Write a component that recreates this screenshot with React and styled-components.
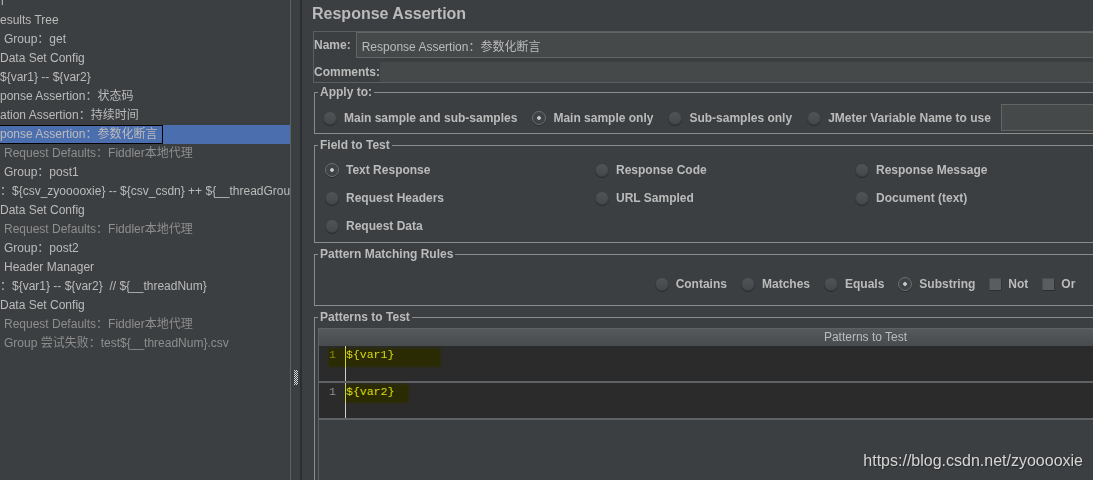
import React from "react";
import styled, { createGlobalStyle } from "styled-components";

const FONT = `"Liberation Sans", Arial, "Noto Sans CJK SC", sans-serif`;
const MONO = `"Liberation Mono", "Courier New", monospace`;

const GlobalStyle = createGlobalStyle`
  html, body { margin: 0; padding: 0; background: #3c3f41; }
  body { font-family: ${FONT}; }
  * { box-sizing: border-box; }
`;

const Window = styled.div`
  position: relative;
  display: flex;
  width: 1093px;
  height: 480px;
  overflow: hidden;
  background: #3c3f41;
  color: #bbbbbb;
  font-family: ${FONT};
`;

/* ---------- left tree ---------- */
const TreePane = styled.div`
  flex: none;
  width: 291px;
  border-right: 1px solid #5e6163;
  overflow: hidden;
`;

const TreeList = styled.ul`
  list-style: none;
  margin: -8px 0 0;
  padding: 0;
`;

const TreeRow = styled.li`
  height: 19px;
  line-height: 19px;
  font-size: 12px;
  white-space: pre;
  overflow: hidden;
  padding-left: ${(p) => p.$indent || 0}px;
  color: ${(p) => (p.$disabled ? "#8e8e8e" : "#bbbbbb")};
  background: ${(p) => (p.$selected ? "#4b6eaf" : "transparent")};
`;

const FocusLabel = styled.span`
  display: inline-block;
  height: 19px;
  line-height: 17px;
  border: 1px solid #000;
  border-left: none;
  padding-right: 5px;
`;

/* ---------- splitter ---------- */
const Splitter = styled.div`
  flex: none;
  width: 11px;
  border-right: 2px solid #2b2d2f;
  padding: 370px 0 0 3px;
`;

const Grip = () => {
  const dots = [];
  for (let y = 0; y < 15; y++) {
    for (let x = 0; x < 4; x++) {
      if ((x + y) % 2 === 0) dots.push(<rect key={`${x}-${y}`} x={x} y={y} width="1" height="1" />);
    }
  }
  return (
    <svg width="4" height="15" viewBox="0 0 4 15" fill="#d8d8d8" style={{ display: "block" }}>
      {dots}
    </svg>
  );
};

/* ---------- right editor ---------- */
const Editor = styled.div`
  flex: none;
  width: 1120px;
  padding: 0 6px 0 10px;
  display: flex;
  flex-direction: column;
`;

const Title = styled.h1`
  margin: 0;
  height: 27px;
  padding-top: 1px;
  font-size: 16px;
  line-height: 26px;
  font-weight: bold;
  color: #bbbbbb;
`;

const NameBox = styled.div`
  margin: 4px 0 0 1px;
  border: 1px solid #5c5f61;
  border-right: none;
  display: flex;
  flex-direction: column;
  gap: 4px;
`;

const FieldRow = styled.div`
  display: flex;
  align-items: center;
  height: ${(p) => p.$h}px;
`;

const BoldLabel = styled.span`
  flex: none;
  font-size: 12px;
  font-weight: bold;
  color: #bbbbbb;
  white-space: nowrap;
  margin-right: ${(p) => p.$gap || 0}px;
`;

const TextField = styled.div`
  flex: 1;
  align-self: stretch;
  background: #45494a;
  border: ${(p) => (p.$bordered ? "1px solid #646464" : "none")};
  border-right: none;
  padding-left: 5px;
  font-size: 12px;
  display: flex;
  align-items: center;
  color: #bbbbbb;
  white-space: nowrap;
`;

const Group = styled.fieldset`
  margin: ${(p) => p.$mt}px 0 0 2px;
  padding: 0;
  border: 1px solid #8c8c8c;
  min-width: 0;
`;

const Legend = styled.legend`
  margin-left: 3px;
  padding: 0 2px;
  font-size: 12px;
  font-weight: bold;
  line-height: 15px;
  color: #bbbbbb;
`;

const OptionRow = styled.div`
  display: flex;
  align-items: center;
  gap: ${(p) => p.$gap}px;
  padding: ${(p) => p.$pad};
  justify-content: ${(p) => (p.$center ? "center" : "flex-start")};
`;

const OptionGrid = styled.div`
  display: grid;
  grid-template-columns: 270px 260px auto;
  grid-auto-rows: 20px;
  row-gap: 8px;
  padding: 7px 0 6px 10px;
`;

const Option = styled.label`
  display: flex;
  align-items: center;
  gap: ${(p) => (p.$box ? 6 : 7)}px;
  height: 20px;
  font-size: 12px;
  font-weight: bold;
  color: #bbbbbb;
  white-space: nowrap;
`;

const RadioDot = styled.span`
  flex: none;
  width: 14px;
  height: 14px;
  border-radius: 50%;
  border: 1px solid ${(p) => (p.$checked ? "#6b6e71" : "#3b3e40")};
  background: ${(p) =>
    p.$checked
      ? "radial-gradient(circle, #c8c8c8 0 1.5px, #404345 2.2px)"
      : "linear-gradient(#515457, #45484a)"};
  box-shadow: 0 1px 0 #2a2c2e;
`;

const CheckBox = styled.span`
  flex: none;
  width: 13px;
  height: 13px;
  background: #5a5d5f;
  border: 1px solid #4a4d4f;
  border-bottom-color: #2b2d2f;
  border-right-color: #333537;
`;

const VarField = styled.div`
  flex: 1;
  height: 27px;
  margin-left: -5px;
  background: #45494a;
  border: 1px solid #646464;
  border-right: none;
`;

const Radio = ({ checked, children }) => (
  <Option>
    <RadioDot $checked={checked} />
    {children}
  </Option>
);

const Check = ({ children }) => (
  <Option $box>
    <CheckBox />
    {children}
  </Option>
);

/* ---------- patterns table ---------- */
const TableWrap = styled.div`
  padding: 3px 3px 0 3px;
`;

const Table = styled.div`
  border-left: 1px solid #5e6163;
  height: 160px;
`;

const TableHeader = styled.div`
  height: 18px;
  line-height: 17px;
  text-align: center;
  font-size: 12px;
  color: #bbbbbb;
  border-top: 1px solid #5d6164;
  background: linear-gradient(#55595c, #474b4e);
`;

const CodeRow = styled.div`
  position: relative;
  display: flex;
  height: 37px;
  background: #2b2b2b;
  border-bottom: 2px solid #5f6265;
  font-family: ${MONO};
  font-size: 11.5px;
  line-height: 18px;
`;

const Gutter = styled.div`
  flex: none;
  width: 27px;
  border-right: 1px solid #d0d0d0;
  padding-left: 10px;
  color: #8a8a8a;
`;

const Code = styled.div`
  flex: 1;
  color: #dadada;
  white-space: pre;
`;

const Highlight = styled.span`
  position: absolute;
  left: ${(p) => p.$left}px;
  top: ${(p) => p.$top}px;
  width: ${(p) => p.$width}px;
  height: 19px;
  background: #ffff10;
  mix-blend-mode: multiply;
  filter: blur(0.8px);
  border-radius: 2px;
  pointer-events: none;
`;

const Watermark = styled.div`
  position: absolute;
  right: 10px;
  bottom: 10px;
  font-family: ${FONT};
  font-size: 16px;
  line-height: 18px;
  color: #d6d6d6;
  text-shadow: 1px 1px 1px rgba(0, 0, 0, 0.35);
`;

const treeRows = [
  { text: "l", indent: 1 },
  { text: "esults Tree" },
  { text: "Group：get", indent: 4 },
  { text: "Data Set Config" },
  { text: "${var1} -- ${var2}" },
  { text: "ponse Assertion：状态码" },
  { text: "ation Assertion：持续时间" },
  { text: "ponse Assertion：参数化断言", selected: true },
  { text: "Request Defaults：Fiddler本地代理", indent: 4, disabled: true },
  { text: "Group：post1", indent: 4 },
  { text: "：${csv_zyooooxie} -- ${csv_csdn} ++ ${__threadGroupName}" },
  { text: "Data Set Config" },
  { text: "Request Defaults：Fiddler本地代理", indent: 4, disabled: true },
  { text: "Group：post2", indent: 4 },
  { text: "Header Manager", indent: 4 },
  { text: "：${var1} -- ${var2}  // ${__threadNum}" },
  { text: "Data Set Config" },
  { text: "Request Defaults：Fiddler本地代理", indent: 4, disabled: true },
  { text: "Group 尝试失败：test${__threadNum}.csv", indent: 4, disabled: true },
];

export default function App() {
  return (
    <>
      <GlobalStyle />
      <Window>
        <TreePane>
          <TreeList>
            {treeRows.map((r, i) => (
              <TreeRow key={i} $indent={r.indent} $disabled={r.disabled} $selected={r.selected}>
                {r.selected ? <FocusLabel>{r.text}</FocusLabel> : r.text}
              </TreeRow>
            ))}
          </TreeList>
        </TreePane>
        <Splitter>
          <Grip />
        </Splitter>
        <Editor>
          <Title>Response Assertion</Title>
          <NameBox>
            <FieldRow $h={26}>
              <BoldLabel $gap={5}>Name:</BoldLabel>
              <TextField $bordered>Response Assertion：参数化断言</TextField>
            </FieldRow>
            <FieldRow $h={20}>
              <BoldLabel>Comments:</BoldLabel>
              <TextField />
            </FieldRow>
          </NameBox>

          <Group $mt={2}>
            <Legend>Apply to:</Legend>
            <OptionRow $gap={15} $pad="4px 0 2px 8px">
              <Radio>Main sample and sub-samples</Radio>
              <Radio checked>Main sample only</Radio>
              <Radio>Sub-samples only</Radio>
              <Radio>JMeter Variable Name to use</Radio>
              <VarField />
            </OptionRow>
          </Group>

          <Group $mt={4}>
            <Legend>Field to Test</Legend>
            <OptionGrid>
              <Radio checked>Text Response</Radio>
              <Radio>Response Code</Radio>
              <Radio>Response Message</Radio>
              <Radio>Request Headers</Radio>
              <Radio>URL Sampled</Radio>
              <Radio>Document (text)</Radio>
              <Radio>Request Data</Radio>
            </OptionGrid>
          </Group>

          <Group $mt={4}>
            <Legend>Pattern Matching Rules</Legend>
            <OptionRow $gap={14} $center $pad="12px 0 11px 0">
              <Radio>Contains</Radio>
              <Radio>Matches</Radio>
              <Radio>Equals</Radio>
              <Radio checked>Substring</Radio>
              <Check>Not</Check>
              <Check>Or</Check>
            </OptionRow>
          </Group>

          <Group $mt={4}>
            <Legend>Patterns to Test</Legend>
            <TableWrap>
              <Table>
                <TableHeader>Patterns to Test</TableHeader>
                <CodeRow>
                  <Gutter>1</Gutter>
                  <Code>{"${var1}"}</Code>
                  <Highlight $left={9} $top={2} $width={113} />
                </CodeRow>
                <CodeRow>
                  <Gutter>1</Gutter>
                  <Code>{"${var2}"}</Code>
                  <Highlight $left={26} $top={1} $width={64} />
                </CodeRow>
              </Table>
            </TableWrap>
          </Group>
        </Editor>
        <Watermark>https://blog.csdn.net/zyooooxie</Watermark>
      </Window>
    </>
  );
}
